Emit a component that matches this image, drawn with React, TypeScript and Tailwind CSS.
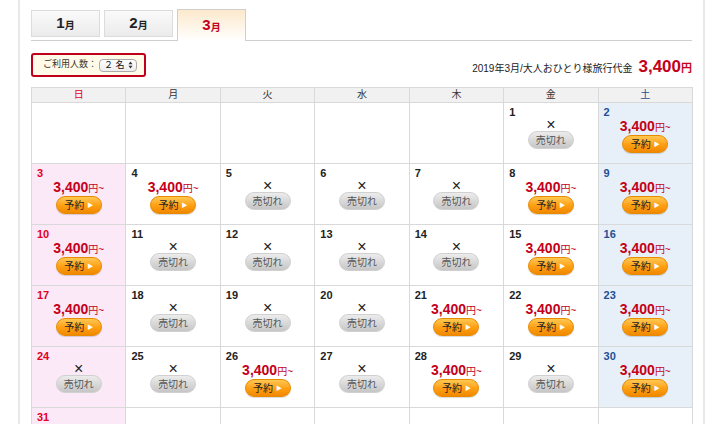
import React from "react";

const FONT = { fontFamily: '"Liberation Sans", "Noto Sans CJK JP", sans-serif' };

const WEEK = ["日", "月", "火", "水", "木", "金", "土"];

// true = bookable, false = sold out
const OPEN: Record<number, boolean> = {
  1: false, 2: true, 3: true, 4: true, 5: false, 6: false, 7: false,
  8: true, 9: true, 10: true, 11: false, 12: false, 13: false, 14: false,
  15: true, 16: true, 17: true, 18: false, 19: false, 20: false, 21: true,
  22: true, 23: true, 24: false, 25: false, 26: true, 27: false, 28: true,
  29: false, 30: true, 31: true,
};

const Tab = ({ n, active }: { n: number; active?: boolean }) => (
  <div
    className={
      active
        ? "w-[69px] h-[32px] -mb-px border border-b-0 border-[#cfcfcf] bg-gradient-to-b from-[#fce9cc] to-white flex items-center justify-center text-[#c4001a]"
        : "w-[69px] h-[27px] mb-[3px] border border-[#dcdcdc] bg-gradient-to-b from-[#fafafa] to-[#ebebeb] flex items-center justify-center text-[#222]"
    }
  >
    <span className="text-[15px] font-bold">{n}</span>
    <span className="text-[10px] font-bold mt-[3px]">月</span>
  </div>
);

const Reserve = () => (
  <div className="w-[46px] h-[18px] rounded-full border border-[#e88a00] bg-gradient-to-b from-[#ffc84f] via-[#ffa114] to-[#f08800] shadow-[0_1px_1px_rgba(0,0,0,0.15)] flex items-center justify-center gap-[3px] text-[10px] text-[#222]">
    <span>予約</span>
    <span className="text-[6px] text-white">▶</span>
  </div>
);

const SoldOut = () => (
  <div className="w-[46px] h-[18px] rounded-full bg-gradient-to-b from-[#ececec] to-[#c6c6c6] border border-[#d0d0d0] flex items-center justify-center text-[10px] text-[#555]">
    売切れ
  </div>
);

const Cell = ({ day, col }: { day: number | null; col: number }) => {
  const bg =
    day === null ? "bg-white" : col === 0 ? "bg-[#fbe9f7]" : col === 6 ? "bg-[#e7f0f9]" : "bg-white";
  const numColor = col === 0 ? "text-[#e1001e]" : col === 6 ? "text-[#1d5193]" : "text-[#222]";
  return (
    <div className={`h-[61px] border-r border-b border-[#d9d9d9] ${bg} flex flex-col`}>
      {day !== null && (
        <>
          <div className={`pl-[5px] pt-[4px] h-[15px] text-[11px] font-bold leading-none ${numColor}`}>{day}</div>
          {day !== 31 &&
            (OPEN[day] ? (
              <div className="flex flex-col items-center">
                <div className="h-[15px] leading-[15px] text-[#c4001a] whitespace-nowrap">
                  <span className="text-[14px] font-bold">3,400</span>
                  <span className="text-[10px]">円~</span>
                </div>
                <div className="mt-[2px]">
                  <Reserve />
                </div>
              </div>
            ) : (
              <div className="flex flex-col items-center">
                <div className="h-[13px] leading-[13px] text-[16px] text-[#222]">×</div>
                <SoldOut />
              </div>
            ))}
        </>
      )}
    </div>
  );
};

const App = () => {
  const cells: (number | null)[] = [null, null, null, null, null];
  for (let d = 1; d <= 31; d++) cells.push(d);
  while (cells.length % 7) cells.push(null);

  return (
    <div className="w-[720px] h-[424px] overflow-hidden bg-white" style={FONT}>
      <div className="ml-[18px] w-[687px] min-h-[424px] border-x-2 border-[#e9e9e9] pl-[11px] pr-[11px] pt-[9px]">
        <div className="flex items-end gap-[4px] border-b border-[#cfcfcf] h-[32px]">
          <Tab n={1} />
          <Tab n={2} />
          <Tab n={3} active />
        </div>

        <div className="flex items-end justify-between mt-[12px]">
          <div className="w-[115px] h-[24px] rounded-[3px] border-2 border-[#c0001a] bg-[#fffbe8] flex items-center pl-[10px] gap-[2px] text-[9px] text-[#333] whitespace-nowrap">
            <span>ご利用人数：</span>
            <span className="h-[13px] w-[38px] pl-[4px] pr-[3px] rounded-[4px] border border-[#aaa] bg-gradient-to-b from-white to-[#eee] flex items-center justify-between leading-none text-[9px] text-[#111]">
              <span>２ 名</span>
              <svg width="5" height="8" viewBox="0 0 5 8">
                <path d="M0.5 3.2 L2.5 0.5 L4.5 3.2 Z M0.5 4.8 L2.5 7.5 L4.5 4.8 Z" fill="#333" />
              </svg>
            </span>
          </div>
          <div className="flex items-baseline text-[10px] text-[#222] mb-[-2px] whitespace-nowrap">
            <span>2019年3月/大人おひとり様旅行代金</span>
            <span className="ml-[6px] text-[17px] font-bold text-[#c4001a]">3,400</span>
            <span className="text-[11px] font-bold text-[#c4001a]">円</span>
          </div>
        </div>

        <div className="mt-[10px] w-[662px] grid grid-cols-7 border-l border-t border-[#d9d9d9]">
          {WEEK.map((w, i) => (
            <div
              key={w}
              className={`h-[15px] border-r border-b border-[#d9d9d9] bg-[#f1f1f1] text-[10px] leading-[14px] text-center ${
                i === 0 ? "text-[#e1001e]" : i === 6 ? "text-[#1d5193]" : "text-[#333]"
              }`}
            >
              {w}
            </div>
          ))}
          {cells.map((d, i) => (
            <Cell key={i} day={d} col={i % 7} />
          ))}
        </div>
      </div>
    </div>
  );
};

export default App;
